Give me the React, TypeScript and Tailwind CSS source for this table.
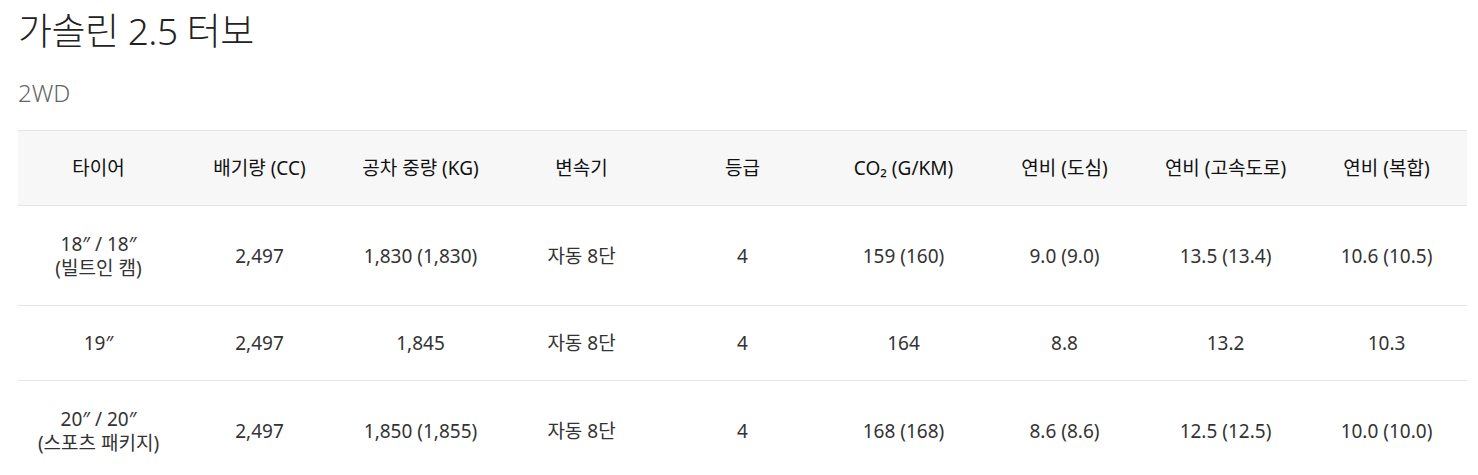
const headers = [
  '타이어',
  '배기량 (CC)',
  '공차 중량 (KG)',
  '변속기',
  '등급',
  'CO₂ (G/KM)',
  '연비 (도심)',
  '연비 (고속도로)',
  '연비 (복합)',
];

const rows: string[][][] = [
  [['18″ / 18″', '(빌트인 캠)'], ['2,497'], ['1,830 (1,830)'], ['자동 8단'], ['4'], ['159 (160)'], ['9.0 (9.0)'], ['13.5 (13.4)'], ['10.6 (10.5)']],
  [['19″'], ['2,497'], ['1,845'], ['자동 8단'], ['4'], ['164'], ['8.8'], ['13.2'], ['10.3']],
  [['20″ / 20″', '(스포츠 패키지)'], ['2,497'], ['1,850 (1,855)'], ['자동 8단'], ['4'], ['168 (168)'], ['8.6 (8.6)'], ['12.5 (12.5)'], ['10.0 (10.0)']],
];

export default function App() {
  return (
    <div
      className="min-h-[475px] bg-white px-[18px] pt-[8px] text-[#222]"
      style={{ fontFamily: '"Noto Sans", "Noto Sans CJK KR", sans-serif' }}
    >
      <h1 className="text-[37px] font-light leading-[46px] tracking-[-0.5px]">가솔린 2.5 터보</h1>
      <p className="mt-[24px] text-[24px] font-light leading-[30px] text-[#666]">2WD</p>

      <table className="mt-[22px] w-[1449px] table-fixed border-collapse">
        <thead>
          <tr className="border-y border-[#e5e5e5] bg-[#f7f7f7]">
            {headers.map((h) => (
              <th key={h} className="h-[75px] text-center text-[19px] font-normal text-[#111]">
                {h}
              </th>
            ))}
          </tr>
        </thead>
        <tbody>
          {rows.map((row, i) => (
            <tr key={i} className="border-b border-[#e5e5e5]">
              {row.map((cell, j) => (
                <td
                  key={j}
                  className={`text-center text-[19px] leading-[24px] text-[#333] ${i === 1 ? 'h-[75px]' : 'h-[100px]'}`}
                >
                  {cell.map((line) => (
                    <div key={line}>{line}</div>
                  ))}
                </td>
              ))}
            </tr>
          ))}
        </tbody>
      </table>
    </div>
  );
}
